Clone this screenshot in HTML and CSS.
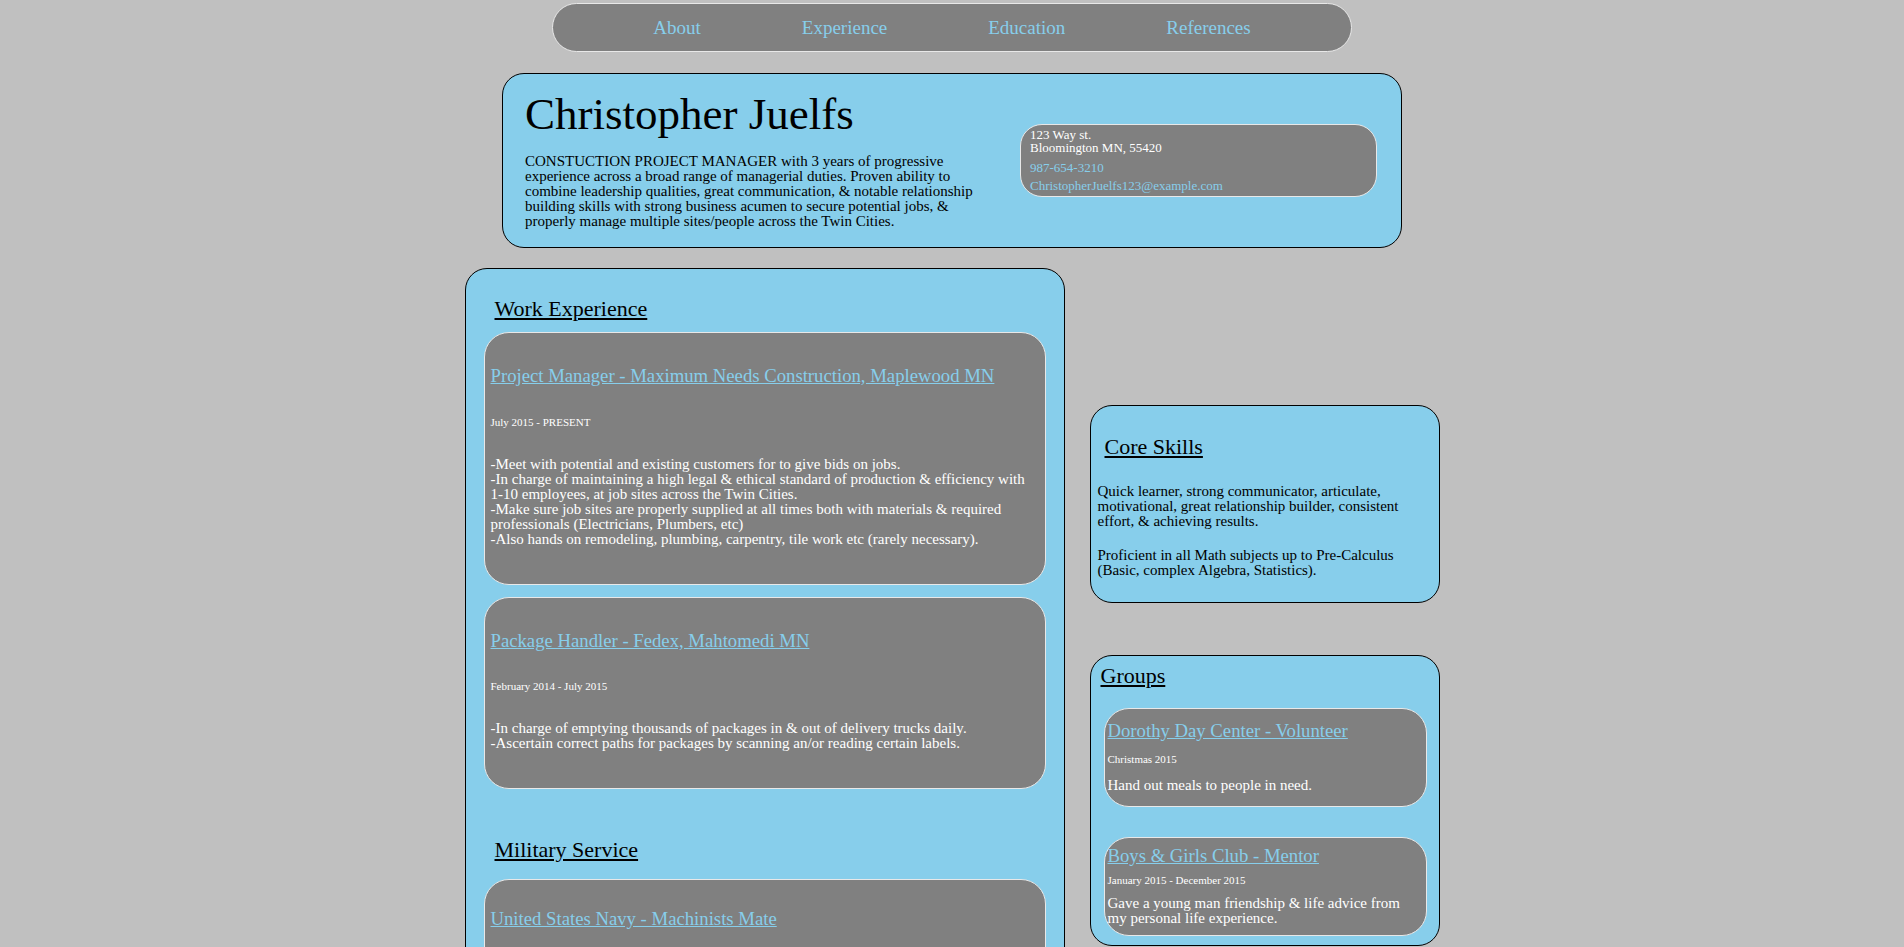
FILE: index.html
```html
<!DOCTYPE html>
<html lang="en">
<head>
    <meta charset="UTF-8">
    <meta name="viewport" content="width=device-width, initial-scale=1.0">
    <title>Christopher Juelfs - Resume</title>
    <link rel="stylesheet" href="styles.css">
</head>
<body>

    <!-- Navigation -->
    <nav class="topnav">
        <ul>
            <li><a href="#about">About</a></li>
            <li><a href="#experience">Experience</a></li>
            <li><a href="#education">Education</a></li>
            <li><a href="#references">References</a></li>
        </ul>
    </nav>

    <!-- Intro -->
    <header class="intro" id="about">
        <div class="intro-text">
            <h1 class="name">Christopher Juelfs</h1>
            <p class="summary">CONSTUCTION PROJECT MANAGER with 3 years of progressive experience across a broad range of managerial duties. Proven ability to combine leadership qualities, great communication, &amp; notable relationship building skills with strong business acumen to secure potential jobs, &amp; properly manage multiple sites/people across the Twin Cities.</p>
        </div>
        <div class="contact">
            <p class="address">123 Way st.<br>Bloomington MN, 55420</p>
            <p class="phone"><a href="tel:9876543210">987-654-3210</a></p>
            <p class="email"><a href="mailto:ChristopherJuelfs123@example.com">ChristopherJuelfs123@example.com</a></p>
        </div>
    </header>

    <main class="content">

        <!-- Work Experience -->
        <section class="card experience" id="experience">
            <h2 class="card-title">Work Experience</h2>

            <div class="job">
                <h3 class="job-title"><a href="#">Project Manager - Maximum Needs Construction, Maplewood MN</a></h3>
                <h4 class="job-date">July 2015 - PRESENT</h4>
                <p class="job-desc">-Meet with potential and existing customers for to give bids on jobs.<br>
                -In charge of maintaining a high legal &amp; ethical standard of production &amp; efficiency with 1-10 employees, at job sites across the Twin Cities.<br>
                -Make sure job sites are properly supplied at all times both with materials &amp; required professionals (Electricians, Plumbers, etc)<br>
                -Also hands on remodeling, plumbing, carpentry, tile work etc (rarely necessary).</p>
            </div>

            <div class="job">
                <h3 class="job-title"><a href="#">Package Handler - Fedex, Mahtomedi MN</a></h3>
                <h4 class="job-date">February 2014 - July 2015</h4>
                <p class="job-desc">-In charge of emptying thousands of packages in &amp; out of delivery trucks daily.<br>
                -Ascertain correct paths for packages by scanning an/or reading certain labels.</p>
            </div>

            <h2 class="card-title military" id="education">Military Service</h2>

            <div class="job">
                <h3 class="job-title"><a href="#">United States Navy - Machinists Mate</a></h3>
                <h4 class="job-date">June 2009 - June 2013</h4>
                <p class="job-desc">-Operated &amp; maintained propulsion and auxiliary machinery aboard ship.<br>
                -Trained &amp; supervised junior sailors on equipment safety.</p>
            </div>
        </section>

        <!-- Side column -->
        <aside class="side" id="references">
            <section class="card skills">
                <h2 class="card-title">Core Skills</h2>
                <p class="skill-text">Quick learner, strong communicator, articulate, motivational, great relationship builder, consistent effort, &amp; achieving results.</p>
                <p class="skill-text">Proficient in all Math subjects up to Pre-Calculus (Basic, complex Algebra, Statistics).</p>
            </section>

            <section class="card groups">
                <h2 class="card-title">Groups</h2>

                <div class="group">
                    <h3 class="group-title"><a href="#">Dorothy Day Center - Volunteer</a></h3>
                    <h4 class="group-date">Christmas 2015</h4>
                    <p class="group-desc">Hand out meals to people in need.</p>
                </div>

                <div class="group">
                    <h3 class="group-title"><a href="#">Boys &amp; Girls Club - Mentor</a></h3>
                    <h4 class="group-date">January 2015 - December 2015</h4>
                    <p class="group-desc">Gave a young man friendship &amp; life advice from my personal life experience.</p>
                </div>
            </section>
        </aside>

    </main>

</body>
</html>
```

FILE: styles.css
```css
/* Reset */
* {
    box-sizing: border-box;
}

body {
    margin: 0;
    background-color: #c0c0c0; /* Silver */
    font-family: 'Liberation Serif', 'Times New Roman', serif;
    line-height: 1;
    color: #000;
}

h1, h2, h3, h4, p, ul {
    margin: 0;
    padding: 0;
}

/* Navigation */
.topnav {
    width: 800px;
    margin: 3px auto 0;
    padding: 14px 0;
    background-color: #808080;
    border: 1px solid #e8e8e8;
    border-radius: 25px;
}

.topnav ul {
    list-style-type: none;
    display: flex;
    justify-content: center;
    gap: 101px;
    font-size: 19px;
}

.topnav a {
    color: #87ceeb;
    text-decoration: none;
}

/* Intro */
.intro {
    width: 900px;
    margin: 21px auto 0;
    padding: 18px 24px 18px 22px;
    display: flex;
    justify-content: space-between;
    align-items: center;
    background-color: #87ceeb;
    border: 1px solid #000;
    border-radius: 22px;
}

.intro-text {
    width: 460px;
}

.name {
    font-size: 45px;
    font-weight: normal;
    margin-bottom: 17px;
}

.summary {
    font-size: 15px;
}

.contact {
    width: 357px;
    padding: 3px 9px 4px;
    background-color: #808080;
    border: 1px solid #e8e8e8;
    border-radius: 22px;
    color: #fff;
    font-size: 13px;
}

.contact a {
    color: #87ceeb;
    text-decoration: none;
}

.phone {
    margin-top: 7px;
}

.email {
    margin-top: 5px;
}

/* Main columns */
.content {
    display: flex;
    justify-content: center;
    align-items: flex-start;
    gap: 25px;
    margin-top: 20px;
}

.card {
    background-color: #87ceeb;
    border: 1px solid #000;
    border-radius: 22px;
}

.card-title {
    font-size: 22px;
    font-weight: normal;
    text-decoration: underline;
}

/* Work experience */
.experience {
    width: 600px;
    padding: 29px 18px 30px;
}

.experience .card-title {
    margin: 0 0 12px 11px;
}

.experience .military {
    margin-top: 50px;
    margin-bottom: 18px;
}

.job {
    padding: 34px 6px 37px;
    background-color: #808080;
    border: 1px solid #e8e8e8;
    border-radius: 25px;
    color: #fff;
}

.job + .job {
    margin-top: 12px;
}

.military + .job {
    padding-top: 30px;
}

.job-title,
.group-title {
    font-size: 18.72px;
    font-weight: normal;
}

.job-title a,
.group-title a {
    color: #87ceeb;
}

.job-title {
    margin-bottom: 31px;
}

.job-date,
.group-date {
    font-size: 11px;
    font-weight: normal;
}

.job-date {
    margin-bottom: 29px;
}

.job-desc,
.group-desc {
    font-size: 15px;
}

/* Side column */
.side {
    width: 350px;
    padding-top: 137px;
}

.skills {
    padding: 30px 7px 24px;
}

.skills .card-title {
    margin: 0 0 26px 7px;
}

.skill-text {
    font-size: 15px;
}

.skill-text + .skill-text {
    margin-top: 19px;
}

.groups {
    margin-top: 52px;
    padding: 9px 12px 9px 10px;
}

.groups .card-title {
    margin-bottom: 21px;
}

.group {
    height: 99px;
    margin-left: 3px;
    padding: 0 8px 0 3px;
    display: flex;
    flex-direction: column;
    justify-content: space-evenly;
    background-color: #808080;
    border: 1px solid #e8e8e8;
    border-radius: 25px;
    color: #fff;
}

.group + .group {
    margin-top: 30px;
}
```
